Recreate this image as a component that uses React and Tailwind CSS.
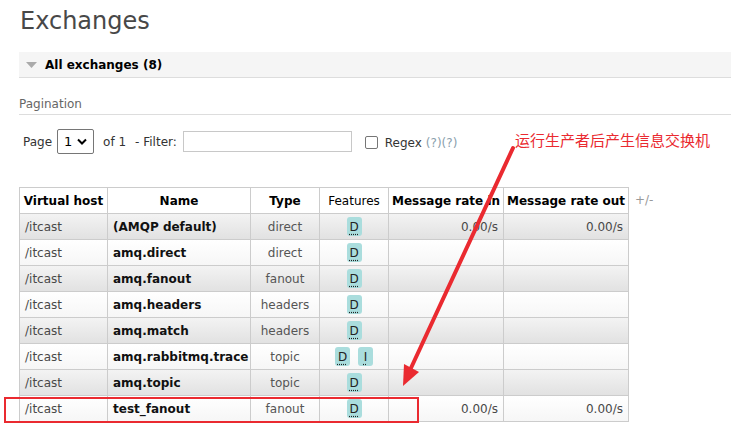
import React from 'react';

const rows = [
  { name: '(AMQP default)', type: 'direct', features: ['D'], rateIn: '0.00/s', rateOut: '0.00/s' },
  { name: 'amq.direct', type: 'direct', features: ['D'] },
  { name: 'amq.fanout', type: 'fanout', features: ['D'] },
  { name: 'amq.headers', type: 'headers', features: ['D'] },
  { name: 'amq.match', type: 'headers', features: ['D'] },
  { name: 'amq.rabbitmq.trace', type: 'topic', features: ['D', 'I'] },
  { name: 'amq.topic', type: 'topic', features: ['D'] },
  { name: 'test_fanout', type: 'fanout', features: ['D'], rateIn: '0.00/s', rateOut: '0.00/s' },
];

const Badge = ({ letter }) => (
  <span className="inline-flex items-center justify-center w-[15px] h-[19px] rounded-[3px] bg-[#aadddd] text-[#222] text-[12px] underline decoration-dotted underline-offset-[3px]">
    {letter}
  </span>
);

const App = () => {
  return (
    <div className="relative w-[731px] h-[436px] overflow-hidden bg-white font-['DejaVu_Sans',sans-serif] text-[#484848]">
      <div className="pl-[19px]">
        <h1 className="pt-[7px] pl-[1px] text-[24px] leading-[29px] text-[#484848]">Exchanges</h1>

        <div className="mt-[16px] h-[26px] flex items-center gap-[8px] bg-[#f5f5f5] border-b border-[#dddddd] pl-[7px]">
          <svg width="11" height="6" viewBox="0 0 11 6">
            <polygon points="0,0 11,0 5.5,6" fill="#aaaaaa" />
          </svg>
          <span className="text-[12px] font-bold text-black">All exchanges (8)</span>
        </div>

        <div className="mt-[17px] text-[12px] text-[#666] leading-[18px] pb-[1px] border-b border-[#dddddd]">Pagination</div>

        <div className="mt-[14px] flex items-center text-[12px] text-[#333] h-[25px]">
          <span className="ml-[4px]">Page</span>
          <div className="ml-[5px] w-[37px] h-[25px] border border-[#767676] rounded-[2px] flex items-center justify-between px-[6px] text-[13px] text-black">
            <span>1</span>
            <svg width="10" height="7" viewBox="0 0 10 7">
              <polyline points="1,1.5 5,5.5 9,1.5" fill="none" stroke="#000" strokeWidth="2" />
            </svg>
          </div>
          <span className="ml-[9px]">of 1</span>
          <span className="ml-[9px]">- Filter:</span>
          <div className="ml-[6px] w-[169px] h-[21px] border border-[#c8c8c8]" />
          <div className="ml-[13px] w-[13px] h-[13px] border border-[#767676] rounded-[2px] mt-[2px]" />
          <span className="ml-[7px] mt-[2px]">Regex</span>
          <span className="ml-[4px] mt-[2px] text-[#8aa0ad]">(?)(?)</span>
        </div>

        <div className="mt-[33px] flex items-start">
          <table className="table-fixed border-collapse w-[609px] text-[12px]">
            <colgroup>
              <col className="w-[88px]" />
              <col className="w-[143px]" />
              <col className="w-[69px]" />
              <col className="w-[69px]" />
              <col className="w-[115px]" />
              <col className="w-[125px]" />
            </colgroup>
            <thead>
              <tr className="bg-white text-black">
                <th className="h-[26px] border border-[#cccccc] font-bold px-0 whitespace-nowrap">Virtual host</th>
                <th className="h-[26px] border border-[#cccccc] font-bold">Name</th>
                <th className="h-[26px] border border-[#cccccc] font-bold">Type</th>
                <th className="h-[26px] border border-[#cccccc] font-normal">Features</th>
                <th className="h-[26px] border border-[#cccccc] font-bold px-0 whitespace-nowrap">Message rate in</th>
                <th className="h-[26px] border border-[#cccccc] font-bold px-0 whitespace-nowrap">Message rate out</th>
              </tr>
            </thead>
            <tbody>
              {rows.map((row, i) => (
                <tr
                  key={row.name}
                  className={i % 2 === 0 ? 'bg-gradient-to-b from-[#f3f3f3] to-[#e1e1e1]' : 'bg-gradient-to-b from-white to-[#f6f6f6]'}
                >
                  <td className="h-[26px] border border-[#cccccc] pl-[5px] text-[#484848]">/itcast</td>
                  <td className="h-[26px] border border-[#cccccc] pl-[5px] font-bold text-[#111] whitespace-nowrap">{row.name}</td>
                  <td className="h-[26px] border border-[#cccccc] text-center text-[#555]">{row.type}</td>
                  <td className="h-[26px] border border-[#cccccc] text-center">
                    <div className="flex items-center justify-center gap-[8px]">
                      {row.features.map((f) => (
                        <Badge key={f} letter={f} />
                      ))}
                    </div>
                  </td>
                  <td className="h-[26px] border border-[#cccccc] text-right pr-[5px] text-[#484848]">{row.rateIn}</td>
                  <td className="h-[26px] border border-[#cccccc] text-right pr-[5px] text-[#484848]">{row.rateOut}</td>
                </tr>
              ))}
            </tbody>
          </table>
          <span className="ml-[6px] mt-[4px] text-[12px] text-[#999]">+/-</span>
        </div>
      </div>

      <div className="absolute left-[515px] top-[129px] text-[15px] leading-[22px] text-[#ea2a30] font-['Noto_Sans_CJK_SC',sans-serif]">
        运行生产者后产生信息交换机
      </div>

      <svg className="absolute left-0 top-0 pointer-events-none" width="731" height="436" viewBox="0 0 731 436">
        <line x1="513" y1="148" x2="411" y2="368" stroke="#ea2a30" strokeWidth="4" strokeLinecap="round" />
        <polygon points="403,386 419,372 404,364" fill="#ea2a30" />
        <rect x="5" y="398" width="413" height="24" fill="none" stroke="#ea2a30" strokeWidth="2" />
      </svg>
    </div>
  );
};

export default App;
